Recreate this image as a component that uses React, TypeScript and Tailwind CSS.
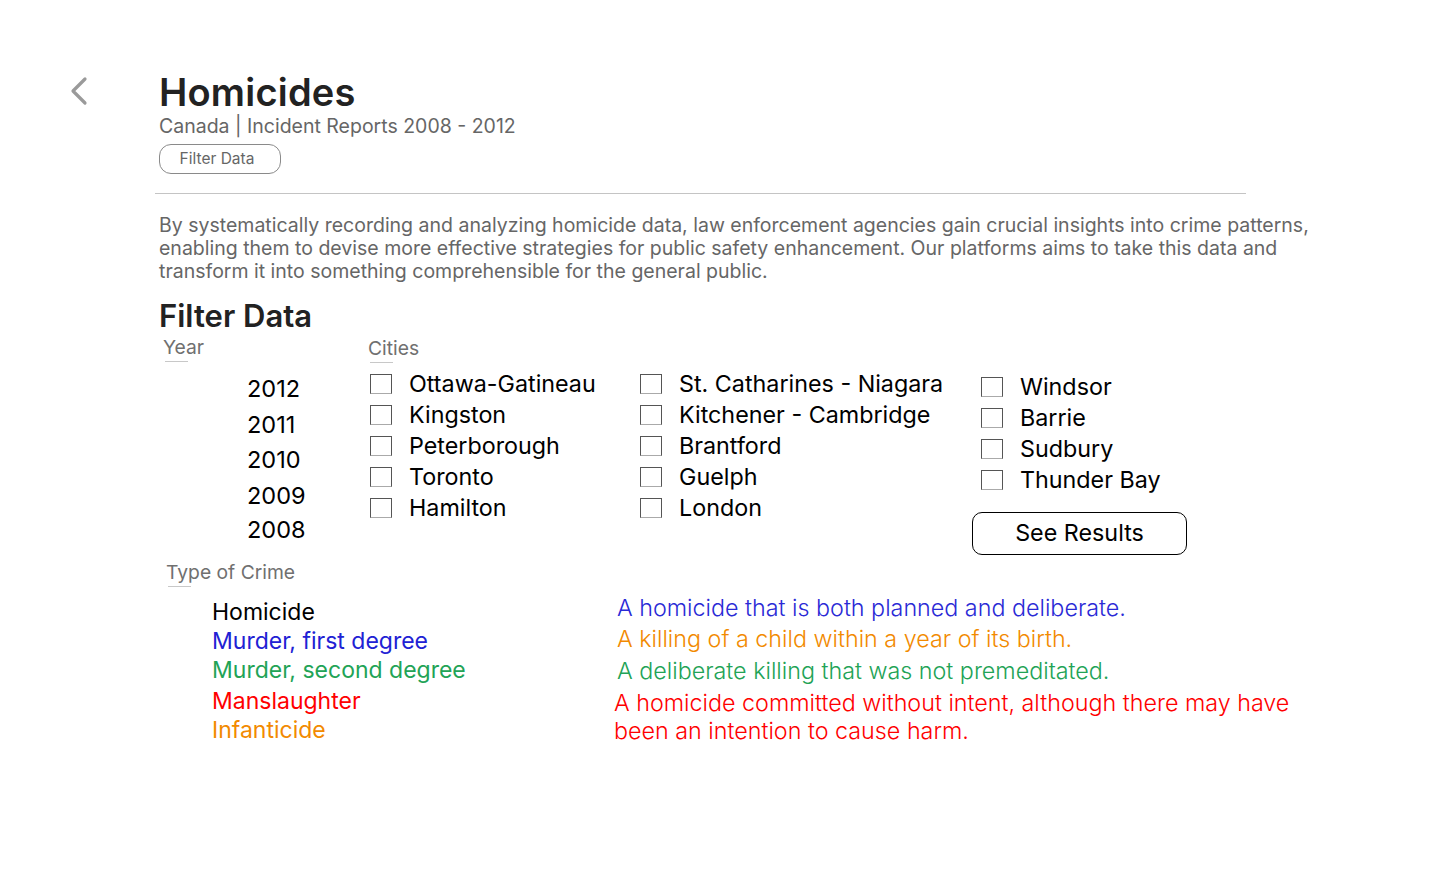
const cities: string[][] = [
  ['Ottawa-Gatineau', 'Kingston', 'Peterborough', 'Toronto', 'Hamilton'],
  ['St. Catharines - Niagara', 'Kitchener - Cambridge', 'Brantford', 'Guelph', 'London'],
  ['Windsor', 'Barrie', 'Sudbury', 'Thunder Bay'],
];

const years = ['2012', '2011', '2010', '2009', '2008'];

const crimes = [
  { name: 'Homicide', color: 'text-black' },
  { name: 'Murder, first degree', color: 'text-[#2121d4]' },
  { name: 'Murder, second degree', color: 'text-[#22a356]' },
  { name: 'Manslaughter', color: 'text-[#ff0000]' },
  { name: 'Infanticide', color: 'text-[#f28a00]' },
];

function Label({ children, className = '' }: { children: string; className?: string }) {
  return (
    <div className={`flex flex-col ${className}`}>
      <span className="text-[19.3px] leading-[22px] text-[#707070]">{children}</span>
      <span className="mt-[3px] ml-[2px] h-px w-[23px] bg-[#c8c8c8]" />
    </div>
  );
}

function CityRow({ name }: { name: string }) {
  return (
    <label className="flex h-[31px] items-center">
      <span className="h-[20px] w-[22px] shrink-0 border border-[#555] border-b-[#aaa] bg-white" />
      <span className="ml-[17px] text-[23.3px] leading-none text-black">{name}</span>
    </label>
  );
}

export default function App() {
  return (
    <div className="min-h-[879px] w-full bg-white font-['Inter','Liberation_Sans',sans-serif]">
      <div className="flex pt-[70px]">
        <div className="w-[159px] shrink-0 pl-[68px] pt-[5px]">
          <svg width="22" height="32" viewBox="0 0 22 32" fill="none">
            <path d="M17 4 L5 16 L17 28" stroke="#9a9a9a" strokeWidth="3.2" strokeLinecap="round" strokeLinejoin="round" />
          </svg>
        </div>
        <div className="flex flex-1 flex-col">
          <h1 className="text-[38px] font-semibold leading-[44px] tracking-[0.2px] text-[#222]">Homicides</h1>
          <p className="mt-0 text-[19.5px] leading-[24px] text-[#666]">Canada | Incident Reports 2008 - 2012</p>
          <button className="mt-[6px] flex h-[30px] w-[122px] items-center justify-center rounded-[12px] border border-[#8a8a8a] pr-[6px] text-[15.5px] text-[#666]">
            Filter Data
          </button>
        </div>
      </div>

      <div className="ml-[155px] mt-[19px] h-px w-[1091px] bg-[#c4c4c4]" />

      <div className="pl-[159px]">
        <p className="mt-[20px] w-[1160px] text-[19.5px] leading-[23px] text-[#666]">
          By systematically recording and analyzing homicide data, law enforcement agencies gain crucial insights into crime patterns,
          enabling them to devise more effective strategies for public safety enhancement. Our platforms aims to take this data and
          transform it into something comprehensible for the general public.
        </p>

        <h2 className="mt-[15px] text-[31px] font-semibold leading-[36px] text-[#222]">Filter Data</h2>

        <div className="flex">
          <div className="w-[209px] shrink-0">
            <Label className="ml-[4px] mt-[2px]">Year</Label>
            <div className="mt-[9px] flex flex-col pl-[88px] text-[23.5px] leading-none text-black">
              {years.map((y, i) => (
                <span key={y} className={i === 4 ? 'h-[33px] flex items-center' : 'h-[35.5px] flex items-center'}>
                  {y}
                </span>
              ))}
            </div>
          </div>

          <div className="flex flex-col">
            <Label className="mt-[3px]">Cities</Label>
            <div className="mt-[5px] flex pl-[2px]">
              <div className="w-[270px] shrink-0">
                {cities[0].map((c) => (
                  <CityRow key={c} name={c} />
                ))}
              </div>
              <div className="w-[341px] shrink-0">
                {cities[1].map((c) => (
                  <CityRow key={c} name={c} />
                ))}
              </div>
              <div className="flex flex-col pt-[3px]">
                {cities[2].map((c) => (
                  <CityRow key={c} name={c} />
                ))}
                <button className="ml-[-9px] mt-[17px] flex h-[43px] w-[215px] items-center justify-center rounded-[10px] border-[1.5px] border-black text-[23.3px] text-black">
                  See Results
                </button>
              </div>
            </div>
          </div>
        </div>

        <Label className="ml-[7px] mt-[6px]">Type of Crime</Label>

        <div className="flex">
          <div className="w-[455px] shrink-0 pl-[53px] pt-[11px] text-[23px] leading-[29px]">
            {crimes.map((c) => (
              <div key={c.name} className={`${c.color} ${c.name === 'Manslaughter' ? 'mt-[2px]' : ''}`}>{c.name}</div>
            ))}
          </div>
          <div className="flex flex-col pt-[7px] text-[23.3px] font-light leading-[28px]">
            <p className="pl-[3px] text-[#2a2ad6]">A homicide that is both planned and deliberate.</p>
            <p className="mt-[3px] pl-[3px] text-[#f28a00]">A killing of a child within a year of its birth.</p>
            <p className="mt-[4px] pl-[3px] text-[#22a356]">A deliberate killing that was not premeditated.</p>
            <p className="mt-[4px] w-[690px] text-[#ff0000]">
              A homicide committed without intent, although there may have been an intention to cause harm.
            </p>
          </div>
        </div>
      </div>
    </div>
  );
}
